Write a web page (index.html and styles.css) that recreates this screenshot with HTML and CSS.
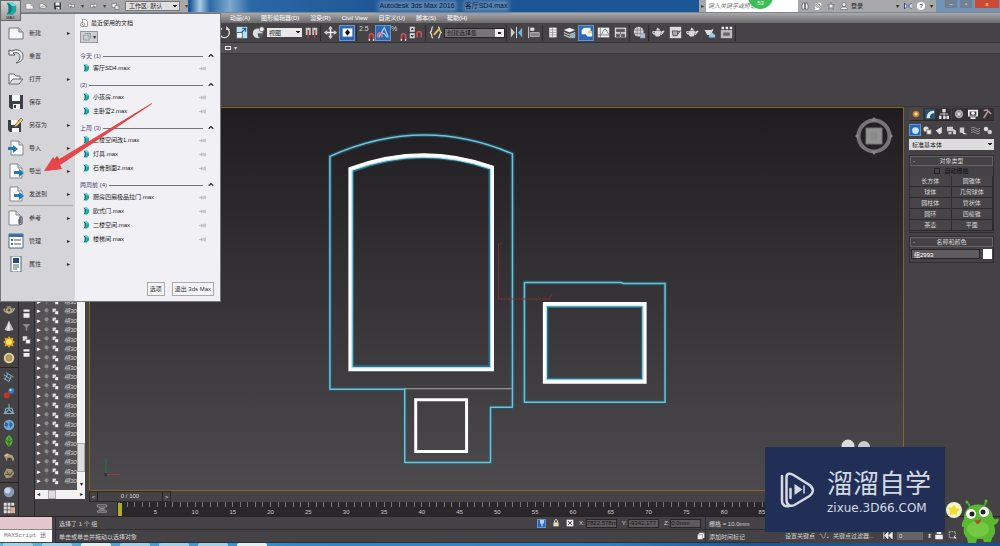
FILE: index.html
```html
<!DOCTYPE html>
<html lang="zh-CN">
<head>
<meta charset="utf-8">
<title>Autodesk 3ds Max 2016</title>
<link rel="stylesheet" href="styles.css">
</head>
<body>
<svg class="defs" aria-hidden="true">
  <symbol id="max" viewBox="0 0 16 16"><path d="M3 1l6 2v10l-6 2 2-4V5z" fill="#087a80"/><path d="M5 1h5l4 4v6l-4 4H5l4-4V5z" fill="#18a8a5"/><path d="M5 1h5l4 4-5 0z" fill="#6bd7cd"/></symbol>
  <symbol id="pin" viewBox="0 0 12 8"><path d="M0 4h4M4 1v6M4 3h5M4 5h5M9 1v6M11 1v6" stroke="#a2a2a8" fill="none"/></symbol>
  <symbol id="page" viewBox="0 0 16 16"><path d="M1 3h10l4 4v7H1z" fill="#f5f6f6" stroke="#74777a"/><path d="M11 3v4h4" fill="#ccc" stroke="#74777a"/></symbol>
  <symbol id="undo" viewBox="0 0 16 16"><path d="M1 2v5h6L5 5c4-1 7 0 7 4 0 3-2 4-4 6 5-1 7-3 7-7 0-5-6-8-11-5z" fill="#f3f3f3" stroke="#55585c"/></symbol>
  <symbol id="folder" viewBox="0 0 16 16"><path d="M1 13V3h5l2 2h4v3" fill="#f4f4f4" stroke="#686b70"/><path d="M1 13l4-5h10l-4 5z" fill="#dedfe2" stroke="#686b70"/></symbol>
  <symbol id="disk" viewBox="0 0 16 16"><path d="M1 1h14v14H3l-2-2z" fill="#3b4146"/><path d="M4 1h8v6H4zM5 10h7v5H5z" fill="#f6f7f7"/><path d="M6 11h2v3H6z" fill="#3b4146"/></symbol>
  <symbol id="diskpen" viewBox="0 0 16 16"><path d="M0 3h13v12H2l-2-2z" fill="#3b4146"/><path d="M3 3h7v5H3zM4 11h7v4H4z" fill="#f6f7f7"/><path d="M7 8l6-7 2 2-6 6-3 1z" fill="#e4c877" stroke="#70562b" stroke-width=".6"/></symbol>
  <symbol id="doc-arrow" viewBox="0 0 16 16"><path d="M2 1h8l4 4v10H2z" fill="#fafafa" stroke="#85888c"/><path d="M10 1v4h4" fill="#dadada" stroke="#85888c"/><path d="M6 8h5V6l5 4-5 4v-3H6z" fill="#1e7db8"/></symbol>
  <symbol id="doc-in" viewBox="0 0 16 16"><path d="M3 1h8l4 4v10H3z" fill="#fafafa" stroke="#85888c"/><path d="M11 1v4h4" fill="#dadada" stroke="#85888c"/><path d="M0 7h5V5l5 4-5 4v-3H0z" fill="#1e7db8"/></symbol>
  <symbol id="doc-clip" viewBox="0 0 16 16"><path d="M1 1h7l4 4v10H1z" fill="#fafafa" stroke="#85888c"/><path d="M8 1v4h4" fill="#ddd" stroke="#85888c"/><path d="M11 9v4c0 2 3 2 3 0V8c0-2-2-2-2 0v5" fill="none" stroke="#34414e"/></symbol>
  <symbol id="manage" viewBox="0 0 16 16"><path d="M1 1h14v14H1z" fill="#fff" stroke="#526b86"/><path d="M1 1h14v3H1z" fill="#3f6e9c"/><path d="M3 6h2v2H3zM3 10h2v2H3z" fill="#3979b4"/><path d="M6 7h7M6 11h7" stroke="#555"/></symbol>
  <symbol id="props" viewBox="0 0 16 16"><path d="M3 0h10v16H3z" fill="#fff" stroke="#536477"/><path d="M5 2h6v5H5z" fill="#244e78"/><path d="M5 9h6M5 11h6M5 13h4" stroke="#567"/></symbol>
  <symbol id="boxes" viewBox="0 0 12 12"><path d="M1 1h6v6H1z" fill="#ddd"/><path d="M5 5h6v6H5z" fill="#fff" stroke="#555"/></symbol>
  <symbol id="bulb" viewBox="0 0 12 12"><circle cx="6" cy="4" r="3.5" fill="#8b8b8b"/><path d="M5 7h3v4H5z" fill="#666"/></symbol>
  <symbol id="teapot" viewBox="0 0 16 16"><path d="M3 6h8c0 4-1 6-2 7H5C4 12 3 10 3 6z" fill="#d7d8d6"/><path d="M11 8l4-2-4 5M3 7C0 6 0 10 4 10M6 5l1-2 2 2z" fill="none" stroke="#ddd" stroke-width="1.3"/></symbol>
  <symbol id="magnet" viewBox="0 0 10 12"><path d="M2 11V5c0-4 6-4 6 0v6" fill="none" stroke="#d45152" stroke-width="2.2"/><path d="M1 10h2v2H1zM7 10h2v2H7z" fill="#fff"/></symbol>
</svg>

<div class="app">
  <header class="titlebar">
    <div class="quick">
      <button aria-label="新建"><svg><use href="#page"/></svg></button>
      <button aria-label="打开"><svg><use href="#folder"/></svg></button>
      <button aria-label="保存"><svg><use href="#disk"/></svg></button>
      <button aria-label="撤销"><svg viewBox="0 0 16 16"><path d="M1 7l5-5v3h8v6H9V8H6v3z" fill="#eee" stroke="#555"/></svg></button>
      <i>▾</i>
      <button aria-label="重做"><svg viewBox="0 0 16 16"><path d="M15 7l-5-5v3H2v6h5V8h3v3z" fill="#eee" stroke="#555"/></svg></button>
      <i>▾</i>
      <button aria-label="项目"><svg viewBox="0 0 16 16"><path d="M1 3h9v8H1z" fill="#eee" stroke="#555"/><path d="M7 7h8v8H7z" fill="#ddd" stroke="#555"/></svg></button>
      <select class="workspace" aria-label="工作区"><option>工作区: 默认</option></select>
      <i>▾</i>
    </div>
    <h1 class="title"><span>Autodesk 3ds Max 2016</span><span>客厅SD4.max</span></h1>
    <button class="search-arrow" aria-label="展开">▸</button>
    <input class="search" type="text" placeholder="键入关键字或短语" aria-label="搜索">
    <div class="account">
      <svg viewBox="0 0 16 16"><path d="M2 14V7l2-5h3v12zM9 14V2h3l2 5v7z" fill="#eee" stroke="#333"/></svg>
      <svg viewBox="0 0 16 16"><path d="M3 3l9 9M2 9c2 4 5 5 8 4M9 2l4 1 1 4M5 12l-2 3h6" stroke="#fff" stroke-width="2.5" fill="none"/><path d="M3 3l9 9" stroke="#444"/></svg>
      <svg viewBox="0 0 16 16"><path d="M8 1l2 5h5l-4 3 2 6-5-4-5 4 2-6-4-3h5z" fill="#eee" stroke="#444"/></svg>
      <button class="login"><svg viewBox="0 0 16 16"><circle cx="8" cy="5" r="4" fill="#eee" stroke="#444"/><path d="M1 15c0-4 3-5 7-5s7 1 7 5z" fill="#eee" stroke="#444"/></svg>登录</button>
      <span class="spacer"></span><i>▾</i>
      <svg viewBox="0 0 16 16"><path d="M1 2l6 6-6 6V2M15 2L9 8l6 6" fill="#e7edff" stroke="#384b87" stroke-width="2"/></svg>
      <button class="help" aria-label="帮助">?</button><i>▾</i>
    </div>
    <div class="winbuttons"><button aria-label="最小化">–</button><button aria-label="最大化">▫</button><button class="close" aria-label="关闭">x</button></div>
    <div class="bubble">53</div>
  </header>

  <nav class="menubar">
    <button>动画(A)</button><button>图形编辑器(D)</button><button>渲染(R)</button><button>Civil View</button><button>自定义(U)</button><button>脚本(S)</button><button>帮助(H)</button>
  </nav>

  <div class="toolbar">
    <button aria-label="旋转"><svg viewBox="0 0 16 16"><path d="M5 3a6 6 0 1 0 6 0" fill="none" stroke="#ddd" stroke-width="1.6"/><path d="M10 0v5h5z" fill="#ddd"/></svg></button>
    <button aria-label="缩放"><svg viewBox="0 0 16 16"><path d="M2 1h13v14H2z" fill="#b9e1f2"/><path d="M2 8h7v7H2z" fill="#f8fbfc" stroke="#357"/><path d="M8 8l5-5m-4 0h4v4" fill="none" stroke="#155e91" stroke-width="1.5"/></svg></button>
    <button aria-label="放置"><svg viewBox="0 0 16 16"><circle cx="7" cy="9" r="6" fill="#d9dddf"/><path d="M7 9h6v5H8z" fill="#555"/><circle cx="12" cy="4" r="3" fill="#eee" stroke="#666"/></svg></button>
    <select class="viewsel" aria-label="参考坐标系"><option>视图</option></select>
    <button aria-label="轴心"><svg viewBox="0 0 16 16"><path d="M1 2h6v9H1zM9 2h6v9H9z" fill="#ccc"/><path d="M4 5v10M12 5v10" stroke="#944" stroke-width="2"/></svg></button>
    <hr>
    <button aria-label="操纵"><svg viewBox="0 0 16 16"><path d="M8 1v14M1 8h14" stroke="#eee" stroke-width="2"/><path d="M8 0l3 4H5zM8 16l3-4H5zM0 8l4-3v6zM16 8l-4-3v6z" fill="#ccc"/></svg></button>
    <button class="on" aria-label="快捷键"><svg viewBox="0 0 16 16"><path d="M2 3h12v10H2z" fill="#fff"/><path d="M8 4l3 4-3 4-3-4z" fill="#111"/></svg></button>
    <hr>
    <div class="snaps">
      <button aria-label="捕捉"><span>2.5</span><svg><use href="#magnet"/></svg></button>
      <button class="on" aria-label="角度捕捉"><svg viewBox="0 0 16 16"><path d="M2 14L9 2l5 12M5 9c4-1 6 2 7 5" fill="none" stroke="#9bd2f5" stroke-width="1.5"/><path d="M1 14v-3c0-3 5-3 5 0v3" fill="none" stroke="#df7380" stroke-width="2"/></svg></button>
      <button aria-label="百分比捕捉"><span>%</span><svg><use href="#magnet"/></svg></button>
      <button aria-label="微调器捕捉"><svg viewBox="0 0 16 16"><path d="M1 1h6v6H1zM1 9h6v6H1z" fill="#ddd"/><path d="M4 2l2 3H2zM4 14l2-3H2z" fill="#333"/><path d="M10 14V9c0-3 5-3 5 0v5" fill="none" stroke="#d45152" stroke-width="2"/></svg></button>
    </div>
    <hr>
    <button aria-label="编辑选择集"><svg viewBox="0 0 16 16"><path d="M5 1C2 1 5 7 1 8c4 1 1 7 4 7M11 1c3 0 1 6 4 7-3 1-1 7-4 7" fill="none" stroke="#ddd" stroke-width="1.5"/><path d="M6 11l7-8" stroke="#e4bb53" stroke-width="2.5"/></svg></button>
    <select class="setsel" aria-label="选择集"><option>创建选择集</option></select>
    <hr>
    <button aria-label="镜像"><svg viewBox="0 0 16 16"><path d="M1 2l5 6-5 6z" fill="#ccc"/><path d="M15 2l-5 6 5 6z" fill="#6cb8e3"/><path d="M8 1v14" stroke="#eee"/></svg></button>
    <button aria-label="对齐"><svg viewBox="0 0 16 16"><path d="M2 1v14" stroke="#eee"/><path d="M4 2h5v4H4z" fill="#ddd"/><path d="M4 8h11v5H4z" fill="#888" stroke="#bbb"/></svg></button>
    <hr>
    <button aria-label="层"><svg viewBox="0 0 16 16"><path d="M4 2h9v12H4z" fill="#eee"/><path d="M5 5h7M5 8h7M5 11h7M8 2v12" stroke="#999"/></svg></button>
    <button aria-label="层管理器"><svg viewBox="0 0 16 16"><path d="M1 5l7-3 7 3-7 3z" fill="#eee"/><path d="M1 8l7 3 7-3M1 11l7 3 7-3" fill="none" stroke="#ccc" stroke-width="1.5"/><path d="M9 9h6v6H9z" fill="#8fb5d1"/></svg></button>
    <button class="on" aria-label="功能区"><svg viewBox="0 0 16 16"><path d="M2 5l3-3h8v4l2 2v5H9L7 10H2z" fill="#f0f5f9"/><path d="M10 6h5v3h-5z" fill="#e4d26b"/></svg></button>
    <button aria-label="曲线编辑器"><svg viewBox="0 0 16 16"><path d="M1 2h14v12H1z" fill="#eee"/><path d="M4 2v12M1 11h14M4 11c3 0 3-7 6-7s2 6 5 6" fill="none" stroke="#777"/></svg></button>
    <button aria-label="图解视图"><svg viewBox="0 0 16 16"><path d="M1 2h14v12H1z" fill="#ddd"/><path d="M3 4h10v3H3zM3 10h4v3H3zM9 10h4v3H9zM8 7v3" fill="#555" stroke="#555"/></svg></button>
    <hr>
    <button aria-label="材质"><svg viewBox="0 0 16 16"><circle cx="7" cy="7" r="6" fill="#ddd"/><path d="M1 5h12M1 9h12M5 1v12M9 1v12" stroke="#777"/><path d="M9 9h6v6H9z" fill="#a8bfd0"/></svg></button>
    <hr>
    <button aria-label="渲染设置"><svg><use href="#teapot"/></svg></button>
    <button aria-label="渲染帧"><svg viewBox="0 0 16 16"><path d="M1 1h14v14H1z" fill="#ddd"/><path d="M4 6h7l-1 6H5zM11 7l3-1-3 4" fill="#aaa" stroke="#444"/></svg></button>
    <button aria-label="渲染"><svg><use href="#teapot"/></svg></button>
    <button aria-label="云渲染"><svg viewBox="0 0 16 16"><path d="M2 5h8l3-2-3 8H5z" fill="#ddd"/><path d="M7 14l1-4 3-2 4 3v3z" fill="#9bcaf1"/></svg></button>
    <button aria-label="图库"><svg viewBox="0 0 16 16"><path d="M1 5h14v10H1z" fill="#bbb"/><path d="M2 1h3v3H2zM7 1h3v3H7zM12 1h3v3h-3z" fill="#eee"/><path d="M4 8h8v4H4z" fill="#666"/></svg></button>
    <hr>
  </div>
  <div class="subbar"><button aria-label="填充"></button><i>▾</i></div>
  <div class="ribbon"></div>

  <main class="workspace-area">
    <aside class="tools" aria-label="工具">
      <button aria-label="茶壶"><svg viewBox="0 0 16 16"><ellipse cx="8" cy="9" rx="4.5" ry="4" fill="#b7ad88"/><path d="M3 7C0 5 1 11 5 11M12 7l4-1-4 5M5 4h6" fill="none" stroke="#bdb68f" stroke-width="1.4"/><circle cx="8" cy="8" r="2" fill="#555"/></svg></button>
      <button aria-label="圆锥"><svg viewBox="0 0 16 16"><path d="M8 1l6 12c-3 2-9 2-12 0z" fill="#bbb"/><path d="M8 1l1 13H5z" fill="#eee"/></svg></button>
      <button aria-label="太阳"><svg viewBox="0 0 16 16"><path d="M8 0l2 3 4-1-1 4 3 2-3 2 1 4-4-1-2 3-2-3-4 1 1-4-3-2 3-2-1-4 4 1z" fill="#e89b20"/><circle cx="8" cy="8" r="4" fill="#ffe75c"/></svg></button>
      <button aria-label="圆盘"><svg viewBox="0 0 16 16"><circle cx="8" cy="8" r="7" fill="#dfd49c"/><circle cx="8" cy="8" r="4" fill="#b79c59" stroke="#8e7950"/></svg></button>
      <hr>
      <button aria-label="样条线"><svg viewBox="0 0 16 16"><path d="M1 5l10 6M4 2l10 6M1 10l7 4M6 4l-3 7M11 7l-3 7" stroke="#83b6d6" stroke-width="1.3"/></svg></button>
      <button aria-label="胶囊"><svg viewBox="0 0 16 16"><circle cx="5" cy="11" r="4" fill="#c9302b"/><circle cx="11" cy="5" r="4" fill="#387dc4"/><circle cx="10" cy="4" r="1.5" fill="#c6e2f7"/></svg></button>
      <button aria-label="骨骼"><svg viewBox="0 0 16 16"><path d="M8 1v8l-6 5h12L8 9M4 7h8l2 7M4 7l-2 7" fill="none" stroke="#80b1bf" stroke-width="1.4"/></svg></button>
      <button aria-label="地球"><svg viewBox="0 0 16 16"><circle cx="8" cy="8" r="7" fill="#6fa9d8"/><path d="M3 4l4 2-1 5-4-2M9 3l4 4-3 5-2-4" fill="#356999"/></svg></button>
      <button aria-label="植物"><svg viewBox="0 0 16 16"><path d="M8 0l4 4 1 5-2 4-3 3-3-3-2-4 1-5z" fill="#57a834"/><path d="M8 3v12M4 7l4 3 4-3" fill="none" stroke="#255b1e"/></svg></button>
      <button aria-label="动物"><svg viewBox="0 0 16 16"><path d="M1 6l4-3 8 3 2 5-2 3-2-5H6l-1 5-2-5z" fill="#b19a75"/><path d="M3 6l4-1" stroke="#eee"/></svg></button>
      <button aria-label="岩石"><svg viewBox="0 0 16 16"><path d="M1 9l4-7 7 1 3 5-4 6-7 1z" fill="#a79572"/><path d="M5 6l4 5 4-5M3 10h5" fill="none" stroke="#5d523f" stroke-width="1.5"/></svg></button>
      <hr>
      <button aria-label="球体"><svg viewBox="0 0 16 16"><circle cx="8" cy="8" r="7" fill="#8998b4"/><circle cx="6" cy="6" r="4" fill="#c5d5e9"/></svg></button>
      <button aria-label="网格"><svg viewBox="0 0 16 16"><path d="M1 1h4v4H1zM6 1h4v4H6zM11 1h4v4h-4zM1 6h4v4H1zM6 6h4v4H6zM1 11h4v4H1zM6 11h4v4H6z" fill="#ddd"/><path d="M10 7h6v8h-6z" fill="#e0ad8f"/></svg></button>
    </aside>
    <aside class="filters" aria-label="过滤">
      <button aria-label="列表"><svg viewBox="0 0 12 12"><path d="M2 0h8v3H2zM2 5h8v6H2z" fill="#eee"/></svg></button>
      <button aria-label="过滤器"><svg viewBox="0 0 12 12"><path d="M1 2h10L7 7v4H5V7z" fill="#8b8b8b"/></svg></button>
      <button aria-label="层级"><svg><use href="#boxes"/></svg></button>
      <button aria-label="选项"><svg viewBox="0 0 12 12"><path d="M2 1h8v3H2zM2 6h8v5H2z" fill="#eee"/></svg></button>
    </aside>
    <section class="explorer" aria-label="场景资源管理器">
      <div class="exp-body">
        <ul class="exp-list">
          <li><i>▸</i><svg><use href="#bulb"/></svg><svg><use href="#boxes"/></svg><span>组30</span></li>
          <li><i>▸</i><svg><use href="#bulb"/></svg><svg><use href="#boxes"/></svg><span>组30</span></li>
          <li><i>▸</i><svg><use href="#bulb"/></svg><svg><use href="#boxes"/></svg><span>组30</span></li>
          <li><i>▸</i><svg><use href="#bulb"/></svg><svg><use href="#boxes"/></svg><span>组30</span></li>
          <li><i>▸</i><svg><use href="#bulb"/></svg><svg><use href="#boxes"/></svg><span>组30</span></li>
          <li><i>▸</i><svg><use href="#bulb"/></svg><svg><use href="#boxes"/></svg><span>组30</span></li>
          <li><i>▸</i><svg><use href="#bulb"/></svg><svg><use href="#boxes"/></svg><span>组30</span></li>
          <li><i>▸</i><svg><use href="#bulb"/></svg><svg><use href="#boxes"/></svg><span>组30</span></li>
          <li><i>▸</i><svg><use href="#bulb"/></svg><svg><use href="#boxes"/></svg><span>组30</span></li>
          <li><i>▸</i><svg><use href="#bulb"/></svg><svg><use href="#boxes"/></svg><span>组30</span></li>
          <li><i>▸</i><svg><use href="#bulb"/></svg><svg><use href="#boxes"/></svg><span>组30</span></li>
          <li><i>▸</i><svg><use href="#bulb"/></svg><svg><use href="#boxes"/></svg><span>组30</span></li>
          <li><i>▸</i><svg><use href="#bulb"/></svg><svg><use href="#boxes"/></svg><span>组30</span></li>
          <li><i>▸</i><svg><use href="#bulb"/></svg><svg><use href="#boxes"/></svg><span>组30</span></li>
          <li><i>▸</i><svg><use href="#bulb"/></svg><svg><use href="#boxes"/></svg><span>组30</span></li>
          <li><i>▸</i><svg><use href="#bulb"/></svg><svg><use href="#boxes"/></svg><span>组30</span></li>
          <li><i>▸</i><svg><use href="#bulb"/></svg><svg><use href="#boxes"/></svg><span>组30</span></li>
          <li><i>▸</i><svg><use href="#bulb"/></svg><svg><use href="#boxes"/></svg><span>组30</span></li>
          <li><i>▸</i><svg><use href="#bulb"/></svg><svg><use href="#boxes"/></svg><span>组30</span></li>
          <li><i>▸</i><svg><use href="#bulb"/></svg><svg><use href="#boxes"/></svg><span>组30</span></li>
        </ul>
        <div class="vscroll"><span class="thumb"></span><i>▾</i></div>
      </div>
      <div class="hscroll"><i>◂</i><span class="thumb"></span><i>▸</i></div>
    </section>

    <section class="center">
      <div class="viewport">
        <svg class="scene" viewBox="0 0 813 383">
          <g transform="translate(-90 -108)" fill="none" stroke-linejoin="round">
            <g stroke="#1d6077" stroke-width="4" opacity=".65">
              <path d="M329.500 156.500Q422 115 512.500 154V408H490.500V463.500H404.500V390H329.500z"/>
              <path d="M524.500 283H621L624 284H665.500V403H524.500z"/>
            </g>
            <g stroke="#78bfd2" stroke-width="1.500">
              <path d="M329.500 156.500Q422 115 512.500 154V408H490.500V463.500H404.500V390H329.500z"/>
              <path d="M524.500 283H621L624 284H665.500V403H524.500z"/>
            </g>
            <path d="M404 389.500H512" stroke="#aaa"/>
            <path d="M352 171Q422 145 490 169V367.500H352z" stroke="#267089" stroke-width="3"/>
            <path d="M350 169Q422 142.500 492 167.500V370H350z" stroke="#fff" stroke-width="4" stroke-linejoin="miter"/>
            <path d="M351.500 170.500Q422 145 490.500 169V368.500H351.500z" stroke="#a6dce8"/>
            <path d="M547 307H643V380H547z" stroke="#257188" stroke-width="3"/>
            <path d="M545 304.500H645V382.500H545z" stroke="#fff" stroke-width="4" stroke-linejoin="miter"/>
            <path d="M546.500 306.500H643.500V380.500H546.500z" stroke="#a6dce8"/>
            <path d="M415.500 400.500H466.500V452.500H415.500z" stroke="#fff" stroke-width="3" stroke-linejoin="miter"/>
            <path d="M498.500 244V299.500H551M498 246l3-3M549 299l3-4" stroke="#8b3034" opacity=".8"/>
            <path d="M105 460V475" stroke="#287d46"/><path d="M105 475.500H119" stroke="#974044"/><path d="M103 474h3v3h-3z" fill="#334"/>
          </g>
        </svg>
        <svg class="viewcube" viewBox="0 0 40 40"><circle cx="20" cy="20" r="15.500" fill="none" stroke="#747474" stroke-width="4"/><path d="M12 12h16v16H12z" fill="#929292" stroke="#777"/><path d="M17 16h6v8h-6z" fill="#898989"/><path d="M20 1l3 4h-6zM20 39l3-4h-6zM1 20l3-3v6zM39 20l-3-3v6z" fill="#888"/></svg>
      </div>
      <div class="timeslider"><button aria-label="上一帧">&lt;</button><span>0 / 100</span><button aria-label="下一帧">&gt;</button></div>
      <div class="ruler">
        <svg class="curve" viewBox="0 0 14 12"><path d="M1 1h12v3H1zM3 5l8 3M11 5L3 8M1 9h12v2H1z" fill="none" stroke="#aaa"/></svg>
        <ol class="ticks"><li class="now">0</li><li>5</li><li>10</li><li>15</li><li>20</li><li>25</li><li>30</li><li>35</li><li>40</li><li>45</li><li>50</li><li>55</li><li>60</li><li>65</li><li>70</li><li>75</li><li>80</li><li>85</li><li>90</li><li>95</li></ol>
      </div>
    </section>

    <aside class="panel">
      <div class="tabs">
        <button class="active" aria-label="创建"><svg viewBox="0 0 12 12"><circle cx="6" cy="6" r="4" fill="#c97b28"/><circle cx="6" cy="6" r="2" fill="#ffe09b"/></svg></button>
        <button aria-label="修改"><svg viewBox="0 0 12 12"><path d="M0 0h12v12H0z" fill="#2d506c"/><path d="M2 11C2 5 5 2 11 2v3C7 5 6 7 6 11z" fill="#ccecf7"/></svg></button>
        <button aria-label="层次"><svg viewBox="0 0 12 12"><path d="M4 0h4v4H4zM0 8h3v4H0zM5 8h3v4H5zM9 8h3v4H9z" fill="#ddd"/><path d="M6 4v4M1 6h10" stroke="#ddd"/></svg></button>
        <button aria-label="运动"><svg viewBox="0 0 12 12"><circle cx="6" cy="6" r="5" fill="#aaa"/><path d="M6 2v8M2 6h8" stroke="#666"/><circle cx="6" cy="6" r="2" fill="#ddd"/></svg></button>
        <button aria-label="显示"><svg viewBox="0 0 12 12"><path d="M0 1h12v8H0zM3 10h6v2H3z" fill="#eee"/><path d="M2 3h8v5H2z" fill="#444"/><circle cx="6" cy="5" r="2" fill="#fff"/></svg></button>
        <button aria-label="工具"><svg viewBox="0 0 12 12"><path d="M2 2l4-1 5 5M7 3l-5 8" fill="none" stroke="#b69b9d" stroke-width="1.800"/></svg></button>
      </div>
      <div class="cats">
        <button class="on" aria-label="几何体"><svg viewBox="0 0 12 12"><circle cx="6" cy="6" r="4.500" fill="#c5e4f6"/></svg></button>
        <button aria-label="图形"><svg viewBox="0 0 12 12"><circle cx="4" cy="4" r="3.500" fill="#ddd"/><path d="M5 5h6v6H5z" fill="#eee" stroke="#666"/></svg></button>
        <button aria-label="灯光"><svg viewBox="0 0 12 12"><path d="M1 6l8-5v8l-3 2z" fill="#ddd"/></svg></button>
        <button aria-label="摄影机"><svg viewBox="0 0 12 12"><path d="M0 1h8v6H0zM8 4l4 2v5H8zM2 8h4v3H2z" fill="#ccc"/></svg></button>
        <button aria-label="辅助对象"><svg viewBox="0 0 12 12"><path d="M1 2h6v7H1z" fill="#ccc"/><path d="M3 7l8 4-5 0z" fill="#eee"/></svg></button>
        <button aria-label="空间扭曲"><svg viewBox="0 0 12 12"><path d="M0 3q3-3 6 0t6 0M0 6q3-3 6 0t6 0M0 9q3-3 6 0t6 0" fill="none" stroke="#aaa"/></svg></button>
        <button aria-label="系统"><svg viewBox="0 0 12 12"><circle cx="4" cy="4" r="3" fill="#ddd"/><circle cx="9" cy="8" r="3" fill="#ccc"/></svg></button>
      </div>
      <select class="primtype" aria-label="对象类别"><option>标准基本体</option></select>
      <section class="rollout">
        <h2><span>-</span>对象类型</h2>
        <label class="autogrid"><input type="checkbox">自动栅格</label>
        <div class="objgrid"><button>长方体</button><button>圆锥体</button><button>球体</button><button>几何球体</button><button>圆柱体</button><button>管状体</button><button>圆环</button><button>四棱锥</button><button>茶壶</button><button>平面</button></div>
      </section>
      <section class="rollout">
        <h2><span>-</span>名称和颜色</h2>
        <div class="namerow"><input type="text" value="组2993" aria-label="名称"><button class="swatch" aria-label="颜色"></button></div>
      </section>
    </aside>
  </main>

  <footer class="status">
    <div class="script"><div></div><div>MAXScript 迷</div></div>
    <div class="messages"><p>选择了 1 个 组</p><p>单击或单击并拖动以选择对象</p></div>
    <div class="coords">
      <div class="coordrow">
        <button class="on" aria-label="隔离"><svg viewBox="0 0 12 12"><path d="M3 1h6v5L7 8v3H5V8L3 6z" fill="#b6d0f4"/></svg></button>
        <button aria-label="锁定"><svg viewBox="0 0 12 12"><path d="M4 5V3c0-3 4-3 4 0v2" fill="none" stroke="#eee" stroke-width="1.500"/><path d="M2 5h8v6H2z" fill="#e5d9ae"/></svg></button>
        <button aria-label="绝对"><svg viewBox="0 0 12 12"><path d="M1 1h10v10H1z" fill="#eee"/><path d="M3 3l6 6M9 3L3 9" stroke="#444" stroke-width="1.500"/></svg></button>
        <label>X:<input type="text" value="7822.578m"></label><label>Y:<input type="text" value="-9342.177"></label><label>Z:<input type="text" value="0.0mm"></label>
      </div>
      <div class="coordrow end"><svg viewBox="0 0 12 12"><path d="M1 4l3-3h7v7l-3 3H1z" fill="#eee"/><path d="M8 4v7M1 4h7l3-3" stroke="#888" fill="none"/></svg></div>
    </div>
    <div class="gridinfo"><p>栅格 = 10.0mm</p><p>添加时间标记</p></div>
    <div class="keys">
      <button>设置关键点</button><svg viewBox="0 0 16 12"><path d="M1 5c3-6 4 8 7 5s1-9 4-9" fill="none" stroke="#bbb"/><path d="M12 10h3V7z" fill="#ccc"/></svg><button>关键点过滤器...</button>
      <span class="spacer"></span><button aria-label="转至开头"><svg viewBox="0 0 12 8"><path d="M1 0v8M6 0L2 4l4 4zM11 0L7 4l4 4z" fill="#eee" stroke="#eee"/></svg></button><input type="text" value="0" aria-label="当前帧"><span class="spin">⬍</span>
      <svg viewBox="0 0 12 12"><path d="M1 5h10v6H1zM3 1h6v3H3z" fill="#eee"/></svg><svg viewBox="0 0 12 12"><path d="M1 1h8v8H1z" fill="none" stroke="#ddd" stroke-dasharray="2 1"/><path d="M7 6l4 4H8z" fill="#fff"/></svg>
    </div>
  </footer>
  <div class="taskbar"><span class="task"></span><span class="task"></span><span class="task pale"></span><span class="task"></span><span class="task"></span><span class="task"></span><span class="task pale"></span></div>

  <button class="appbtn" aria-label="应用程序"><svg><use href="#max"/></svg><span>MAX</span></button>

  <div class="appmenu">
    <ul class="cmds">
      <li><button><svg><use href="#page"/></svg>新建<i>▸</i></button></li>
      <li><button><svg><use href="#undo"/></svg>重置</button></li>
      <li><button><svg><use href="#folder"/></svg>打开<i>▸</i></button></li>
      <li><button><svg><use href="#disk"/></svg>保存</button></li>
      <li><button><svg><use href="#diskpen"/></svg>另存为<i>▸</i></button></li>
      <li><button><svg><use href="#doc-in"/></svg>导入<i>▸</i></button></li>
      <li><button><svg><use href="#doc-arrow"/></svg>导出<i>▸</i></button></li>
      <li><button><svg><use href="#doc-arrow"/></svg>发送到<i>▸</i></button></li>
      <li class="sep"><button><svg><use href="#doc-clip"/></svg>参考<i>▸</i></button></li>
      <li><button><svg><use href="#manage"/></svg>管理<i>▸</i></button></li>
      <li><button><svg><use href="#props"/></svg>属性<i>▸</i></button></li>
    </ul>
    <div class="recent">
      <h2><svg viewBox="0 0 16 16"><path d="M5 1h6l4 4v10H5z" fill="#fff" stroke="#555"/><circle cx="5" cy="11" r="4" fill="#fff" stroke="#555"/><path d="M5 9v2h2" fill="none" stroke="#555"/></svg>最近使用的文档</h2>
      <button class="viewmode" aria-label="显示方式"><svg viewBox="0 0 16 16"><path d="M1 4h11v10H1zM4 1h11v10" fill="none" stroke="#61798e"/></svg>▾</button>
      <h3>今天 (1)<svg viewBox="0 0 8 8"><path d="M1 5l3-3 3 3" fill="none" stroke="#222" stroke-width="1.500"/></svg></h3>
      <ul><li><svg><use href="#max"/></svg>客厅SD4.max<svg class="pin"><use href="#pin"/></svg></li></ul>
      <h3>(2)<svg viewBox="0 0 8 8"><path d="M1 5l3-3 3 3" fill="none" stroke="#222" stroke-width="1.500"/></svg></h3>
      <ul><li><svg><use href="#max"/></svg>小孩房.max<svg class="pin"><use href="#pin"/></svg></li><li><svg><use href="#max"/></svg>主卧室2.max<svg class="pin"><use href="#pin"/></svg></li></ul>
      <h3>上周 (3)<svg viewBox="0 0 8 8"><path d="M1 5l3-3 3 3" fill="none" stroke="#222" stroke-width="1.500"/></svg></h3>
      <ul><li><svg><use href="#max"/></svg>二楼空间改1.max<svg class="pin"><use href="#pin"/></svg></li><li><svg><use href="#max"/></svg>灯具.max<svg class="pin"><use href="#pin"/></svg></li><li><svg><use href="#max"/></svg>石膏剖面2.max<svg class="pin"><use href="#pin"/></svg></li></ul>
      <h3>两周前 (4)<svg viewBox="0 0 8 8"><path d="M1 5l3-3 3 3" fill="none" stroke="#222" stroke-width="1.500"/></svg></h3>
      <ul><li><svg><use href="#max"/></svg>厨房四扇极品拉门.max<svg class="pin"><use href="#pin"/></svg></li><li><svg><use href="#max"/></svg>欧式门.max<svg class="pin"><use href="#pin"/></svg></li><li><svg><use href="#max"/></svg>二楼空间.max<svg class="pin"><use href="#pin"/></svg></li><li><svg><use href="#max"/></svg>楼梯间.max<svg class="pin"><use href="#pin"/></svg></li></ul>
      <div class="menufoot"><button>选项</button><button>退出 3ds Max</button></div>
    </div>
  </div>
  <svg class="arrow" viewBox="0 0 110 70"><path d="M108 0L16 57l-3-4L0 68l18-2-2-4L108 1z" fill="#de3e40"/><path d="M0 68l9-14 3 4L108 0 15 62l2 4z" fill="#e5484a"/></svg>

  <svg class="ears" viewBox="0 0 30 20"><circle cx="7" cy="7" r="6.500" fill="#ddd"/><circle cx="23" cy="8" r="6" fill="#ccc"/></svg>
  <div class="watermark">
    <svg viewBox="0 0 34 36" fill="none" stroke="#d5d9e3" stroke-width="2.500" stroke-linecap="round"><path d="M1.500 4V29c0 4 3 6 7 5M6 28V5c0-4 4-4 7-2l16 10c5 4 4 8 0 11L14 33c-4 2-8 0-8-5M10 26V17"/><path d="M14 12v11l8-5.500z" fill="#d5d9e3" stroke="none"/><path d="M23.500 14v7" stroke-width="1.500"/></svg>
    <div><strong>溜溜自学</strong><span>zixue.3D66.COM</span></div>
  </div>
  <svg class="mascot" viewBox="0 0 54 46">
    <circle cx="9" cy="11" r="8" fill="#e5f5d6"/><circle cx="9" cy="11" r="6" fill="#fff8b5"/><path d="M9 6l2 3 4 1-3 3v3l-3-1-4 1v-4L3 9l4-1z" fill="#f4da35"/>
    <path d="M25 8l-2-4M39 7l2-4" stroke="#47a62a" stroke-width="2"/><circle cx="22" cy="3" r="1.500" fill="#60bb37"/><circle cx="41" cy="2" r="1.500" fill="#60bb37"/>
    <path d="M19 20C18 1 46 1 48 18c2 3 2 3 5 1 2 3-1 6-4 7 2 6 1 10-2 13l-1 4h-7l-1-3h-6l-1 4h-8l-1-5c-3-3-4-6-3-11-3 0-3-3 0-8z" fill="#5cb832"/>
    <ellipse cx="33" cy="30" rx="11" ry="8" fill="#72c942"/>
    <circle cx="26" cy="15" r="5" fill="#fff"/><circle cx="39" cy="13" r="5" fill="#fff"/><circle cx="27" cy="15" r="2.500" fill="#222"/><circle cx="38" cy="13" r="2.500" fill="#222"/><path d="M29 21q4 2 7-2 0 6-4 6z" fill="#bd422f"/>
  </svg>
</div>
</body>
</html>
```
FILE: styles.css
```css
* { box-sizing: border-box; }
body { margin: 0; background: #444244; }
body, button, input, select { font-family: "Liberation Sans", "Noto Sans CJK SC", sans-serif; font-size: 6px; line-height: 8px; }
button, input, select { margin: 0; padding: 0; border: 0; background: none; color: inherit; border-radius: 0; }
select { appearance: none; }
h1, h2, h3, p, ul, ol, hr { margin: 0; padding: 0; font-size: 6px; font-weight: normal; border: 0; }
ul, ol { list-style: none; }
i { font-style: normal; }
svg { display: block; flex: none; }
.defs { position: absolute; width: 0; height: 0; }
.spacer { flex: 1; }
.on { background: #2e66b5; outline: 1px solid #6495d1; outline-offset: -1px; }

.app { position: relative; display: flex; flex-direction: column; min-height: 100vh; overflow: hidden; color: #d6d6d6; }

.titlebar { position: relative; display: flex; align-items: stretch; height: 13px; background: linear-gradient(90deg, #1e5796 0 19%, #a9cbe7 20%, #2b68a5 21%, #7fa9d0 23%, #2b68a5 25%, #1c5492 40%, #1c5795 70%); border-bottom: 1px solid #7b8794; }
.quick { display: flex; align-items: center; gap: 5px; width: 188px; padding-left: 25px; background: #a8a7aa; color: #444; }
.quick svg { width: 9px; height: 8px; }
.quick i { width: 3px; }
.workspace { flex: 1; height: 10px; padding-left: 3px; border: 1px solid #777; background: #dedee0; color: #222; }
.title { flex: 1; display: flex; justify-content: center; align-items: center; gap: 10px; color: #081b36; font-size: 7px; }
.title span { background: #5681b1; box-shadow: 0 0 4px 2px #5681b1; }
.search-arrow { width: 7px; background: #a8a7aa; color: #333; }
.search { width: 92px; padding-left: 2px; background: #fff; color: #777; font-style: italic; }
.account { display: flex; align-items: center; gap: 5px; width: 138px; padding: 0 3px; background: #a8a7aa; color: #222; }
.account svg { width: 8px; height: 8px; }
.login { display: flex; align-items: center; gap: 3px; }
.help { width: 8px; height: 8px; border-radius: 50%; background: #fff; color: #264b83; font-weight: bold; }
.winbuttons { display: flex; width: 64px; padding: 0 0 3px 8px; gap: 1px; background: #7294b6; color: #fff; }
.winbuttons button { flex: 1; border: 1px solid #7791ac; border-top: 0; background: #6f8195; }
.winbuttons .close { flex: 2; background: #c94b35; }
.bubble { position: absolute; left: 748px; top: -16px; width: 25px; height: 25px; padding-top: 15px; border-radius: 50%; background: #3cbd57; color: #e9ffe9; text-align: center; }

.menubar { display: flex; align-items: center; gap: 11px; height: 10px; padding-left: 230px; background: linear-gradient(#aaa, #69686a); color: #fff; }
.toolbar { display: flex; align-items: center; gap: 1px; height: 20px; padding-left: 216px; background: #454345; border-bottom: 1px solid #343234; }
.toolbar button { position: relative; display: grid; place-items: center; flex: none; width: 16px; height: 16px; }
.toolbar svg { width: 13px; height: 13px; }
.toolbar hr { width: 1px; height: 16px; background: #2e2c2e; }
.snaps { display: flex; margin: 0 1px; }
.snaps span { align-self: start; justify-self: start; font-size: 7px; }
.snaps span + svg { position: absolute; right: 0; bottom: 0; width: 7px; height: 9px; }
.viewsel { width: 35px; height: 9px; padding-left: 2px; background: #e9e9e9; color: #222; }
.setsel { width: 61px; height: 10px; padding-left: 2px; border: 1px solid #252325; background: #777577; color: #181818; }
.viewsel, .primtype, .workspace { background-image: linear-gradient(45deg, transparent 50%, #222 50%), linear-gradient(-45deg, transparent 50%, #222 50%); background-size: 2px 3px; background-position: right 4px center, right 2px center; background-repeat: no-repeat; }
.setsel { background-image: linear-gradient(#222, #222), linear-gradient(#eee, #eee); background-size: 3px 2px, 9px 100%; background-position: right 3px center, right center; background-repeat: no-repeat; }
.subbar { display: flex; align-items: center; gap: 3px; height: 11px; padding-left: 225px; background: #525052; border-bottom: 1px solid #3a383a; }
.subbar button { width: 6px; height: 4px; border: 1px solid #eee; }
.ribbon { height: 53px; background: #444244; border-bottom: 1px solid #393739; }

.workspace-area { display: flex; flex: 1; min-height: 0; }
.tools { display: flex; flex-direction: column; justify-content: flex-end; width: 19px; border-right: 1px solid #282628; }
.tools button { display: grid; place-items: center; height: 16px; }
.tools svg { width: 12px; height: 12px; }
.tools hr { height: 1px; margin: 1px 0; background: #252325; }
.filters { display: flex; flex-direction: column; gap: 3px; width: 16px; padding-top: 202px; align-items: center; border-right: 1px solid #2a282a; }
.filters svg { width: 9px; height: 10px; }
.explorer { display: flex; flex-direction: column; width: 50px; margin-bottom: 17px; padding-top: 190px; }
.exp-body { display: flex; flex: 1; min-height: 0; }
.exp-list { display: flex; flex: 1; flex-direction: column; background: #545254; overflow: hidden; padding-bottom: 4px; }
.exp-list li { display: flex; flex: 1; min-height: 0; align-items: center; gap: 2px; padding-left: 2px; white-space: nowrap; font-style: italic; overflow: hidden; }
.exp-list i { width: 4px; font-size: 7px; font-style: normal; color: #fff; }
.exp-list svg { width: 7px; height: 7px; }
.exp-list span { margin-left: 3px; }
.vscroll { display: flex; flex-direction: column; justify-content: flex-end; gap: 8px; width: 8px; padding-bottom: 2px; background: #f2f2f2; color: #222; text-align: center; }
.vscroll .thumb { height: 29px; border: 1px solid #aaa; background: #ddd; }
.hscroll { display: flex; justify-content: space-between; height: 9px; padding: 0 2px; background: #f2f2f2; color: #222; }
.hscroll .thumb { width: 8px; margin-right: 16px; border: 1px solid #aaa; background: #ddd; }

.center { display: flex; flex: 1; flex-direction: column; min-width: 0; margin-left: 4px; }
.viewport { position: relative; flex: 1; min-height: 0; border: 1px solid #7d6a20; background: linear-gradient(#1f1d20, #4c4a4c); }
.scene { position: absolute; inset: 0; width: 100%; height: 100%; }
.viewcube { position: absolute; right: 9px; top: 8px; width: 40px; height: 40px; }
.timeslider { display: flex; width: 82px; height: 11px; border: 1px solid #2b292b; text-align: center; }
.timeslider button { width: 7px; }
.timeslider span { flex: 1; border: solid #252325; border-width: 0 1px; }
.ruler { display: flex; height: 14px; padding-right: 29px; }
.curve { width: 12px; height: 9px; margin: 2px 9px 0 7px; }
.ticks { display: grid; grid-template-columns: repeat(20, 1fr); flex: 1; padding-left: 2px; background: #292729; }
.ticks li { padding-top: 6px; color: #ccc; background: repeating-linear-gradient(90deg, #777 0 1px, transparent 1px 20%) top left / 100% 5px no-repeat; }
.ticks li:not(.now) { text-indent: -3px; }
.ticks .now { position: relative; color: #000; }
.ticks .now::before { content: ""; position: absolute; left: -1px; top: 1px; width: 4px; height: 13px; background: #b6a829; }

.panel { display: flex; flex-direction: column; width: 96px; padding: 1px 6px 0 5px; background: #444244; }
.tabs { display: flex; justify-content: space-between; height: 13px; border-bottom: 1px solid #2b292b; }
.tabs button { display: grid; place-items: center; width: 14px; background: #343234; }
.tabs .active { background: #494749; }
.tabs svg { width: 10px; height: 10px; }
.cats { display: flex; justify-content: space-between; height: 18px; padding: 3px 0; }
.cats button { display: grid; place-items: center; width: 12px; }
.cats svg { width: 9px; height: 9px; }
.primtype { height: 11px; padding-left: 3px; margin-bottom: 5px; background-color: #ddd; color: #222; }
.rollout { margin-bottom: 3px; padding-bottom: 1px; border: 1px solid #302e30; }
.rollout h2 { position: relative; height: 10px; border: 1px solid #656365; text-align: center; }
.rollout h2 span { position: absolute; left: 2px; top: 0; }
.autogrid { display: flex; justify-content: center; align-items: center; gap: 4px; height: 10px; color: #111; }
.autogrid input { appearance: none; width: 6px; height: 6px; border: 1px solid #222; }
.objgrid { display: grid; grid-template-columns: 1fr 1fr; }
.objgrid button { height: 11px; border: solid #2c2a2c; border-width: 0 1px 1px 0; background: #464446; }
.namerow { display: flex; gap: 3px; padding: 2px 1px; }
.namerow input { flex: 1; min-width: 0; height: 10px; padding-left: 2px; border: 1px solid #272527; background: #5e5c5e; color: #fff; }
.swatch { width: 9px; height: 10px; background: #fff; }

.status { display: flex; height: 27px; border-top: 1px solid #282628; background: #444244; }
.script { width: 52px; font-family: "Liberation Mono", "Noto Sans CJK SC", monospace; color: #777; }
.script div { height: 12px; padding: 2px 4px; background: #e4c7ce; }
.script div + div { height: 13px; background: #fff; border-top: 1px solid #888; }
.messages { flex: 1; margin-left: 3px; }
.messages p, .gridinfo p { height: 13px; padding: 3px 3px 1px; border: solid #302e30; border-width: 0 0 1px 1px; }
.coords { width: 168px; }
.coordrow { display: flex; align-items: center; gap: 5px; height: 13px; border-bottom: 1px solid #302e30; }
.coordrow svg { width: 8px; height: 8px; }
.coordrow button { display: grid; place-items: center; width: 9px; height: 9px; }
.coordrow label { display: flex; align-items: center; gap: 1px; }
.coordrow input { width: 31px; height: 9px; background: #5d5b5d; border: 1px solid #272527; color: #151515; }
.end { justify-content: flex-end; }
.gridinfo { width: 75px; white-space: nowrap; }
.keys { display: flex; align-items: center; gap: 4px; width: 220px; padding: 11px 42px 0 5px; white-space: nowrap; }
.keys svg { width: 10px; height: 9px; }
.keys input { width: 26px; height: 9px; padding-left: 2px; background: #656365; }
.spin { width: 3px; }
.taskbar { display: flex; gap: 6px; height: 3px; background: linear-gradient(90deg, #63b8da, #2f88c9 30%, #2a82c6 60%, #1d5795 75%, #1b4e8b); }
.task { width: 30px; margin-left: 3px; background: #9fd2e6; border-radius: 2px 2px 0 0; }
.pale { background: #e2eff3; }

.appbtn { position: absolute; left: 0; top: 0; z-index: 2; width: 21px; height: 21px; display: flex; flex-direction: column; align-items: center; border: 1px solid #686868; background: linear-gradient(#d3d3d3, #9b9b9b); color: #222; font-size: 4px; line-height: 4px; }
.appbtn svg { width: 14px; height: 15px; }
.appmenu { position: absolute; left: 0; top: 13px; z-index: 1; width: 221px; display: flex; border: 1px solid #77777a; background: #f1f0f4; color: #333; }
.cmds { width: 74px; padding: 7px 2px 26px 7px; background: #d5d4d8; }
.cmds li { height: 23px; }
.cmds .sep { height: 24px; border-top: 1px solid #aaa; }
.cmds button { display: flex; align-items: center; gap: 5px; width: 100%; height: 23px; text-align: left; }
.cmds svg { width: 16px; height: 16px; }
.cmds i { margin-left: auto; margin-right: 3px; color: #222; }
.recent { flex: 1; display: flex; flex-direction: column; padding: 4px 6px 5px 5px; }
.recent h2 { display: flex; align-items: center; gap: 3px; height: 9px; color: #222; }
.recent h2 svg { width: 8px; height: 8px; }
.viewmode { display: flex; align-items: center; gap: 2px; width: 18px; height: 12px; margin: 4px 0 8px; padding-left: 2px; border: 1px solid #999; background: #ceced2; }
.viewmode svg { width: 8px; height: 8px; }
.recent h3 { display: flex; align-items: center; gap: 2px; height: 10px; color: #4b4778; }
.recent h3::after { content: ""; order: 1; flex: 1; height: 1px; background: #74747a; }
.recent h3 svg { order: 2; width: 6px; height: 6px; margin-left: 3px; }
.recent ul { margin-bottom: 5px; }
.recent li { display: flex; align-items: center; gap: 3px; height: 14px; padding: 0 8px 0 2px; color: #222; }
.recent li svg { width: 8px; height: 8px; }
.recent li .pin { width: 7px; height: 5px; margin-left: auto; }
.menufoot { display: flex; justify-content: flex-end; gap: 7px; margin-top: auto; }
.menufoot button { height: 14px; padding: 0 2px; border: 1px solid #aaa; background: #f5f5f7; }
.arrow { position: absolute; left: 44px; top: 103px; width: 110px; height: 70px; z-index: 3; }

.ears { position: absolute; left: 841px; top: 439px; width: 30px; height: 20px; }
.watermark { position: absolute; left: 765px; top: 447px; width: 180px; height: 85px; display: flex; align-items: center; gap: 12px; padding: 0 0 0 15px; background: #212f57; color: #d5d9e3; }
.watermark > svg { width: 35px; height: 36px; }
.watermark strong { display: block; font-size: 26px; line-height: 36px; font-weight: normal; }
.watermark span { display: block; font-family: "DejaVu Sans", sans-serif; font-size: 12px; line-height: 12px; }
.mascot { position: absolute; left: 945px; top: 499px; width: 54px; height: 46px; }
```
